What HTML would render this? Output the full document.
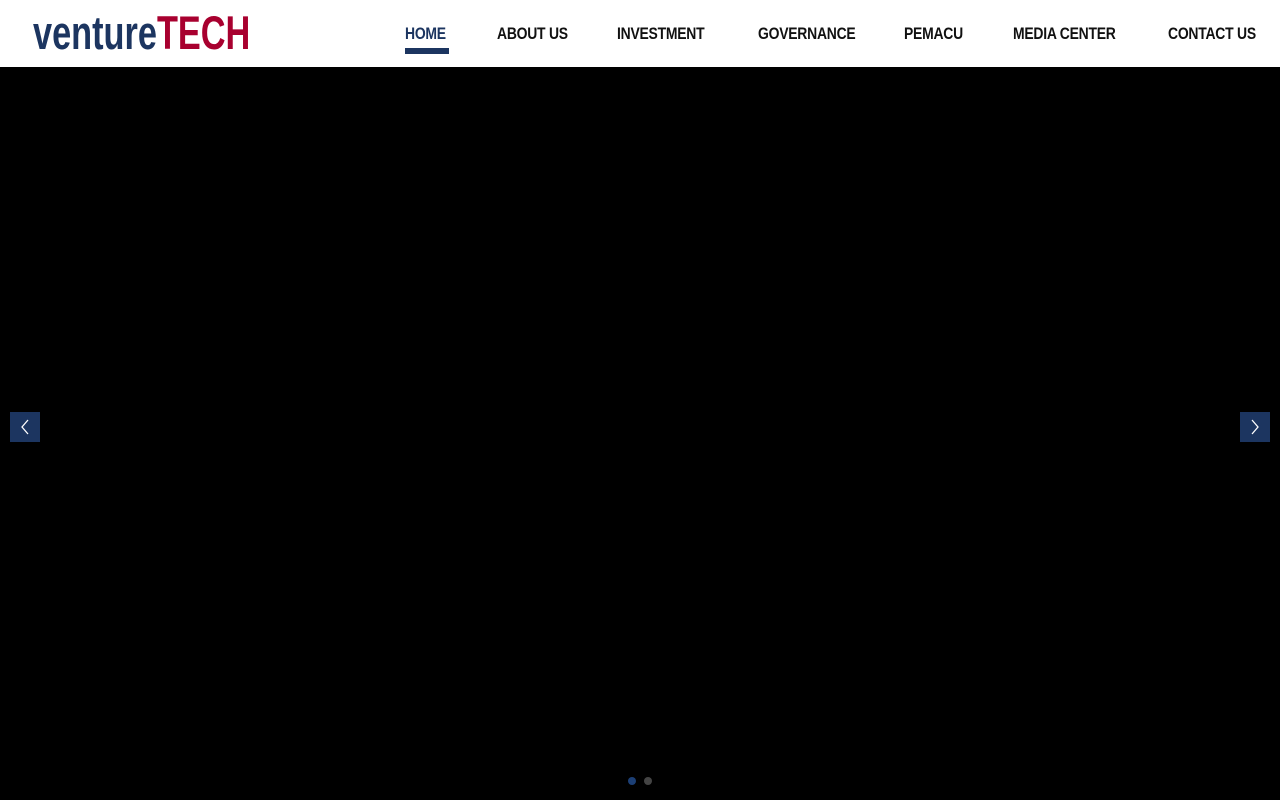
<!DOCTYPE html>
<html><head><meta charset="utf-8"><style>
*{margin:0;padding:0;box-sizing:border-box}
body{width:1280px;height:800px;overflow:hidden;background:#000;font-family:"Liberation Sans",sans-serif}
header{position:absolute;left:0;top:0;width:1280px;height:67px;background:#fff}
.logo{position:absolute;left:33px;top:9px;font-weight:bold;font-size:47px;line-height:48px;transform:scaleX(0.73);transform-origin:left top;white-space:nowrap;font-family:"Liberation Sans Narrow","Liberation Sans",sans-serif}
.logo .a{color:#1c3560}.logo .b{color:#a8002f}
nav a{position:absolute;top:24px;font-size:17px;font-weight:bold;color:#111;text-decoration:none;white-space:nowrap;letter-spacing:-0.3px;transform:scaleX(0.82);transform-origin:left top}
nav a.on{color:#1c3560}
.ul{position:absolute;left:405px;top:48px;width:44px;height:6px;background:#1c3560}
.arr{position:absolute;top:412px;width:30px;height:30px;background:#1c3560}
.dot{position:absolute;top:777px;width:8px;height:8px;border-radius:50%}
</style></head><body>
<header>
<div class="logo"><span class="a">venture</span><span class="b">TECH</span></div>
<nav>
<a class="on" style="left:405px">HOME</a>
<a style="left:497px">ABOUT US</a>
<a style="left:617px">INVESTMENT</a>
<a style="left:758px">GOVERNANCE</a>
<a style="left:904px">PEMACU</a>
<a style="left:1013px">MEDIA CENTER</a>
<a style="left:1168px">CONTACT US</a>
</nav>
<div class="ul"></div>
</header>
<div class="arr" style="left:10px"><svg width="30" height="30"><path d="M18 8 L12 15 L18 22" stroke="#fff" stroke-width="1.3" fill="none"/></svg></div>
<div class="arr" style="left:1240px"><svg width="30" height="30"><path d="M12 8 L18 15 L12 22" stroke="#fff" stroke-width="1.3" fill="none"/></svg></div>
<div class="dot" style="left:628px;background:#1c3f75"></div>
<div class="dot" style="left:644px;background:#444"></div>
</body></html>
